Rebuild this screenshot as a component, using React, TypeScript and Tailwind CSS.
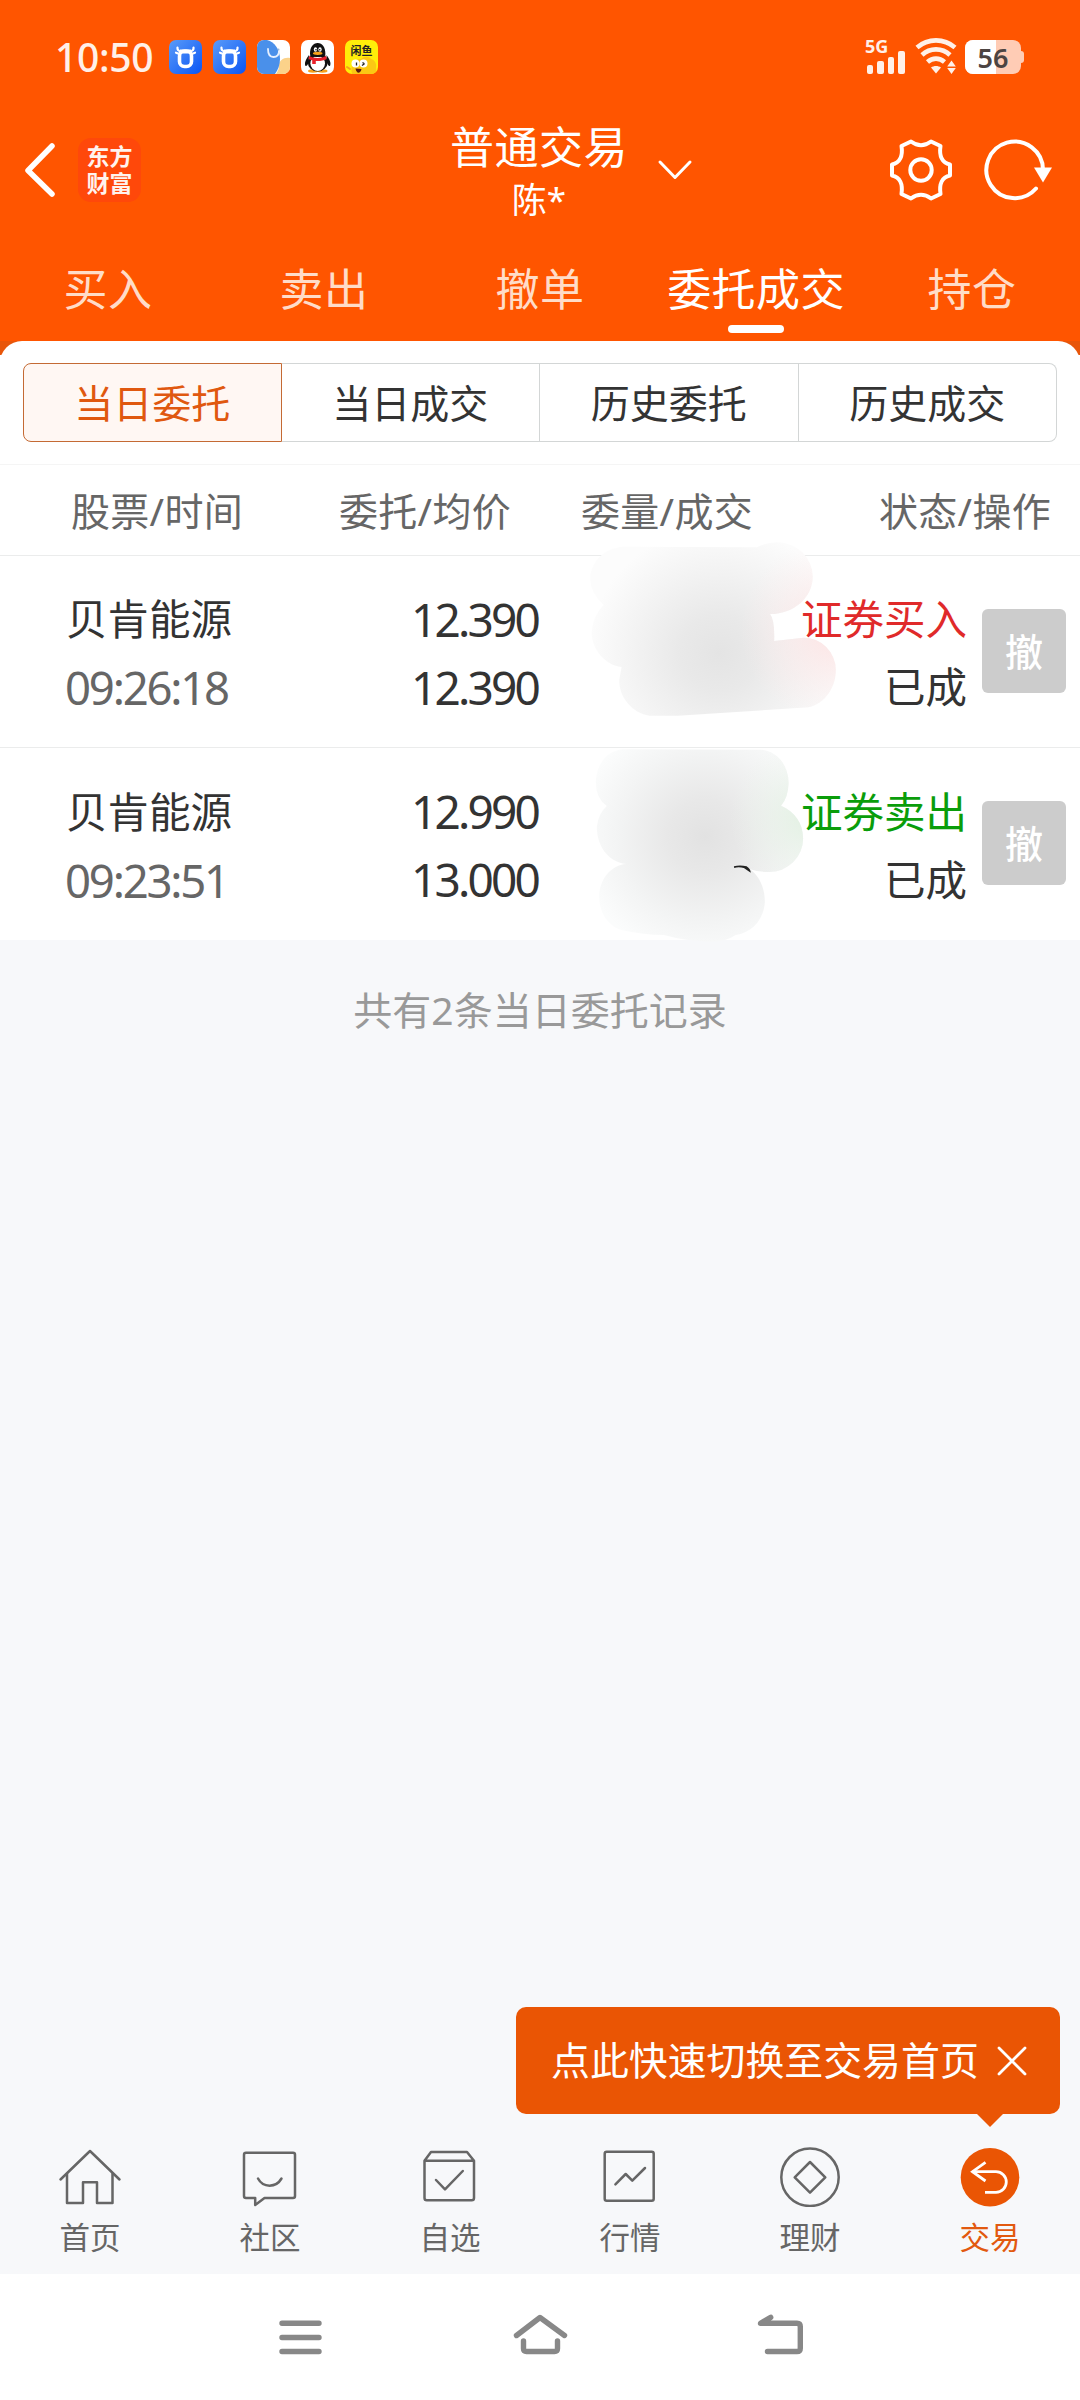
import type { ReactNode } from "react";

// ─── Data ─────────────────────────────────────────────────────────────────────

const tabs = ["买入", "卖出", "撤单", "委托成交", "持仓"];
const activeTab = "委托成交";

const segments = ["当日委托", "当日成交", "历史委托", "历史成交"];

type Order = {
  name: string;
  time: string;
  price: string;
  average: string;
  side: "buy" | "sell";
  status: string;
};

const orders: Order[] = [
  { name: "贝肯能源", time: "09:26:18", price: "12.390", average: "12.390", side: "buy", status: "已成" },
  { name: "贝肯能源", time: "09:23:51", price: "12.990", average: "13.000", side: "sell", status: "已成" },
];

const sideLabel = { buy: "证券买入", sell: "证券卖出" };
const sideStyle = { buy: "text-[#e02a2a]", sell: "text-[#0a9d0a]" };

// ─── Status bar ───────────────────────────────────────────────────────────────

function BullIcon() {
  return (
    <svg viewBox="0 0 33 34" className="h-[34px] w-[33px] rounded-[7px]">
      <defs>
        <linearGradient id="bull" x1="0" y1="0" x2="1" y2="1">
          <stop offset="0" stopColor="#5a9bf8" />
          <stop offset="1" stopColor="#0a55f5" />
        </linearGradient>
      </defs>
      <rect width="33" height="34" fill="url(#bull)" />
      <rect x="10.500" y="11" width="12" height="15.500" rx="5" fill="none" stroke="#fff" strokeWidth="3.600" />
      <path d="M11 9.500h11v4H11z" fill="#fff" />
      <path
        d="M8.500 7.500c-.3 2 .8 3.500 3.500 4M24.500 7.500c.3 2-.8 3.500-3.500 4M7 12.700l4 1.500M26 12.700l-4 1.500"
        stroke="#fff"
        strokeWidth="2.200"
        strokeLinecap="round"
        fill="none"
      />
    </svg>
  );
}

function ElephantIcon() {
  return (
    <svg viewBox="0 0 33 34" className="h-[34px] w-[33px] rounded-[7px]">
      <rect width="33" height="34" fill="#fff" />
      <path d="M33 18c-6-1-11 2-11 8 0 4-2 6-3 8h14z" fill="#fbd28a" />
      <path d="M0 0h10c8 2 13 10 13 19 0 6-2 11-5 15H0z" fill="#4a90ea" />
      <path d="M11 9c0 5 2 8 5.500 8s5.500-2.500 5.500-6" fill="none" stroke="#e6f0ff" strokeWidth="1.800" strokeLinecap="round" />
      <circle cx="21.500" cy="9.500" r="1" fill="#9cb8d8" />
    </svg>
  );
}

function PenguinIcon() {
  return (
    <svg viewBox="0 0 33 34" className="h-[34px] w-[33px] rounded-[7px]">
      <rect width="33" height="34" fill="#fff" />
      <ellipse cx="12" cy="31" rx="5" ry="1.700" fill="#f7a21b" />
      <ellipse cx="21.500" cy="31" rx="5" ry="1.700" fill="#f7a21b" />
      <path d="M8 15c-3 4-5 8-3.500 11 1 .5 2-1 3-3M25.500 15c3 4 5 8 3.500 11-1 .5-2-1-3-3" fill="#111" />
      <ellipse cx="16.700" cy="22" rx="10" ry="9.500" fill="#111" />
      <ellipse cx="16.700" cy="23.500" rx="7.300" ry="7.500" fill="#fff" />
      <path d="M9 14c0-7 3-11 7.700-11s7.700 4 7.700 11c0 2-3 3-7.700 3s-7.700-1-7.700-3z" fill="#111" />
      <ellipse cx="14.500" cy="9.500" rx="1.700" ry="2.300" fill="#fff" />
      <ellipse cx="19" cy="9.500" rx="1.700" ry="2.300" fill="#fff" />
      <circle cx="15" cy="9.700" r=".8" fill="#111" />
      <circle cx="18.700" cy="9.700" r=".8" fill="#111" />
      <ellipse cx="16.700" cy="13.300" rx="4.800" ry="1.600" fill="#f7a21b" />
      <path d="M8.300 16c4 2.500 12.500 2.500 16.700 0l.8 3c-3 1.700-7 2.200-11 2v3h-3.600v-3.800c-1.500-.3-2.800-.7-3.700-1.200z" fill="#e8202a" />
    </svg>
  );
}

function FishIcon() {
  return (
    <div className="relative h-[34px] w-[33px] overflow-hidden rounded-[7px] bg-[#ffee0a]">
      <svg viewBox="0 0 33 34" className="absolute inset-0 h-full w-full">
        <path d="M7 34c-2-8 2-15 9-15 3-3 8-3 10 0 4 1 6 5 5 9l1 6z" fill="#fbc814" />
        <circle cx="10.500" cy="23.500" r="4" fill="#fff" />
        <circle cx="18.500" cy="23.500" r="4" fill="#fff" />
        <path d="M11.500 22.500v3M17 25.500l2.500-1.800M17.500 22.500l2 1.300" stroke="#222" strokeWidth="1.300" />
        <path d="M10.500 28.500l6 .6c-.5 2.500-1.800 3.700-3 3.700s-2.700-1.700-3-4.300z" fill="#5a1a10" />
        <path d="M2 27l3 2" stroke="#f7a21b" strokeWidth="2" strokeLinecap="round" />
      </svg>
      <p className="relative mt-[4px] text-center text-[11px] leading-[13px] font-bold text-[#222]">闲鱼</p>
    </div>
  );
}

function StatusBar() {
  return (
    <div className="flex h-[114px] items-center pr-[56px] pl-[55px]">
      <span className="-mt-[2px] w-[114px] text-[39px] leading-none font-medium tracking-[-.3px] text-[#fff0e8]">
        10:50
      </span>
      <div className="flex gap-[11px]">
        <BullIcon />
        <BullIcon />
        <ElephantIcon />
        <PenguinIcon />
        <FishIcon />
      </div>

      {/* Signal, wifi, battery */}
      <div className="ml-auto flex h-[38px] items-center">
        <div className="-mt-[2px] mr-[2px] flex h-[35px] w-[48px] flex-col justify-between">
          <span className="h-[12px] text-[18px] leading-[14px] font-bold text-[#fff0e8]">5G</span>
          <div className="-mt-[3px] ml-[2px] flex items-end gap-[4px]">
            <i className="h-[9px] w-[6.400px] rounded-[2px] bg-[#fff0e8]" />
            <i className="h-[13px] w-[6.400px] rounded-[2px] bg-[#fff0e8]" />
            <i className="h-[17px] w-[6.400px] rounded-[2px] bg-[#fff0e8]" />
            <i className="h-[23px] w-[6.400px] rounded-[2px] bg-[#fff0e8]" />
          </div>
        </div>
        <svg viewBox="0 0 42 36" className="-mt-[2px] mr-[8px] h-[36px] w-[42px]" fill="none" stroke="#fff0e8" strokeWidth="4.600">
          <path d="M2 9.500c11-9.500 27-9.500 38 0" />
          <path d="M7 17c8-7.500 20-7.500 28 0" />
          <path d="M12.500 24c5-4.500 12-4.500 17 0" />
          <path d="M16 29.500c3-2 7-2 10 0l-5 6z" fill="#fff0e8" stroke="none" />
          <path d="M36.500 22.500l4.300 6h-8.600zM36.500 36l4.300-6h-8.600z" fill="#fff0e8" stroke="none" />
        </svg>
        <div className="flex items-center">
          <div className="relative flex h-[34px] w-[56px] items-center justify-center overflow-hidden rounded-[8px] bg-[#ffccb5]">
            <i className="absolute inset-y-0 left-0 w-[31px] bg-white" />
            <span className="relative text-[27px] leading-none font-semibold text-[#4c4442]">56</span>
          </div>
          <i className="h-[12px] w-[3px] rounded-r-[3px] bg-[#ffccb5]" />
        </div>
      </div>
    </div>
  );
}

// ─── Header ───────────────────────────────────────────────────────────────────

function TitleBar() {
  return (
    <div className="flex h-[112px] items-center px-[24px]">
      <svg viewBox="0 0 34 56" className="-ml-[1px] h-[56px] w-[34px]" fill="none" stroke="#fff" strokeWidth="5.500" strokeLinecap="round" strokeLinejoin="round">
        <path d="M29 4L5 28.500 29 52" />
      </svg>
      <div className="ml-[21px] flex h-[64px] w-[63px] items-center justify-center rounded-[13px] bg-[#ff480a]">
        <p className="w-[46px] text-[23px] leading-[27px] font-bold break-all text-[#fff3ee]">东方财富</p>
      </div>

      <div className="mt-[3px] ml-[309px] flex w-[178px] flex-col items-center text-white">
        <h1 className="text-[44px] leading-[56px] tracking-[.5px]">普通交易</h1>
        <p className="text-[35px] leading-[50px]">陈*</p>
      </div>
      <svg viewBox="0 0 38 22" className="ml-[28px] h-[22px] w-[38px]" fill="none" stroke="#fff" strokeWidth="3" strokeLinecap="round" strokeLinejoin="round">
        <path d="M4 3l15 15.500L34 3" />
      </svg>

      <svg viewBox="-33 -33 66 66" className="ml-auto h-[66px] w-[66px]" fill="none" stroke="#fff" strokeWidth="4" strokeLinejoin="round">
        <path d="M-10-28.500Q0-21 10-28.500L19.500-24C18-14 21-7 29-5.500V5.500C21 7 18 14 19.500 24L10 28.500Q0 21-10 28.500L-19.500 24C-18 14-21 7-29 5.500V-5.500C-21-7-18-14-19.500-24Z" />
        <circle r="10.700" />
      </svg>
      <svg viewBox="0 0 74 66" className="mr-[2px] ml-[26px] h-[66px] w-[74px]" fill="none" stroke="#fff" strokeWidth="4" strokeLinecap="round">
        <path d="M56 51.500A28.300 28.300 0 1 1 63 33" />
        <path d="M54 30.500h18l-9 15z" fill="#fff" stroke="none" />
      </svg>
    </div>
  );
}

function TradeTabs() {
  return (
    <nav className="grid h-[115px] grid-cols-5">
      {tabs.map((tab) => (
        <div
          key={tab}
          className={`flex flex-col items-center pt-[34px] text-[44px] leading-[58px] tracking-[.4px] ${
            tab === activeTab ? "text-white" : "text-[#ffdcc8]"
          }`}
        >
          {tab}
          {tab === activeTab ? <i className="mt-[7px] h-[8px] w-[56px] rounded-full bg-white" /> : null}
        </div>
      ))}
    </nav>
  );
}

// ─── Order list ───────────────────────────────────────────────────────────────

function SegmentControl() {
  return (
    <div className="mx-[23px] grid h-[79px] grid-cols-4 text-[39px] text-[#333]">
      {segments.map((label, i) => (
        <div
          key={label}
          className={`flex items-center justify-center border pt-px ${
            i === 0
              ? "rounded-l-[8px] border-[#c46a34] bg-[#fff7f3] text-[#e0580f]"
              : i === segments.length - 1
                ? "rounded-r-[8px] border-l-0 border-[#d3d6d6]"
                : "border-l-0 border-[#d3d6d6]"
          }`}
        >
          {label}
        </div>
      ))}
    </div>
  );
}

function OrderRow({ order }: { order: Order }) {
  return (
    <div className="flex h-[192px] items-center border-b border-[#ebecec] pr-[14px] pl-[66px] text-[41.500px] leading-[68px] text-[#333] last:border-b-0">
      <div className="mt-[3px] w-[200px]">
        <p>{order.name}</p>
        <p className="-ml-px text-[45.500px] tracking-[-2.200px] text-[#666]">{order.time}</p>
      </div>
      <div className="mt-[2px] w-[272px] text-right text-[46px] tracking-[-2.800px]">
        <p>{order.price}</p>
        <p>{order.average}</p>
      </div>
      <div className="mt-[3px] ml-auto text-right">
        <p className={sideStyle[order.side]}>{sideLabel[order.side]}</p>
        <p>{order.status}</p>
      </div>
      <button className="-mt-[2px] ml-[15px] h-[84px] w-[84px] rounded-[6px] bg-[#ccc] text-[38px] leading-[84px] font-medium text-white">
        撤
      </button>
    </div>
  );
}

// Brushed-out quantities, painted over the third column of both rows.
function QuantityMask() {
  return (
    <svg
      viewBox="0 0 1568 1500"
      preserveAspectRatio="none"
      className="pointer-events-none absolute -top-[16px] left-[540px] h-[500px] w-[540px]"
    >
      <defs>
        <radialGradient id="grey1" gradientUnits="userSpaceOnUse" cx="520" cy="340" r="380">
          <stop offset="0" stopColor="#e4e4e4" />
          <stop offset=".3" stopColor="#e9e9e9" />
          <stop offset=".7" stopColor="#f4f4f4" />
          <stop offset="1" stopColor="#fcfcfc" />
        </radialGradient>
        <radialGradient id="grey2" gradientUnits="userSpaceOnUse" cx="480" cy="890" r="370">
          <stop offset="0" stopColor="#e2e2e2" />
          <stop offset=".3" stopColor="#e8e8e8" />
          <stop offset=".7" stopColor="#f3f4f4" />
          <stop offset="1" stopColor="#fbfcfc" />
        </radialGradient>
        <radialGradient id="pink" gradientUnits="userSpaceOnUse" cx="860" cy="270" r="280">
          <stop offset="0" stopColor="#fde2e2" />
          <stop offset="1" stopColor="#fdeeee" stopOpacity="0" />
        </radialGradient>
        <radialGradient id="green" gradientUnits="userSpaceOnUse" cx="790" cy="830" r="240">
          <stop offset="0" stopColor="#e0f0e0" />
          <stop offset="1" stopColor="#eef5ee" stopOpacity="0" />
        </radialGradient>
        <path
          id="blob1"
          d="M240 20L630 22Q655 8 690 7A102 104 0 0 1 792 110C792 170 740 222 668 222Q682 240 680 303L765 293A94 98 0 0 1 859 390C859 440 830 490 780 502Q600 514 400 527H318C270 520 230 475 230 420L237 381C190 375 150 330 150 275Q155 225 185 195Q146 160 146 115C148 65 185 25 240 20Z"
        />
        <path
          id="blob2"
          d="M240 628L640 629A84 100 0 0 1 722 730Q720 775 700 797C740 815 764 850 764 895A98 100 0 0 1 664 996Q635 996 610 988C640 1010 653 1050 653 1085C650 1140 615 1178 568 1185Q540 1205 500 1205Q420 1203 360 1185Q300 1185 240 1171C200 1160 172 1120 172 1070C172 1020 205 975 250 972C195 965 165 915 165 860Q170 820 194 798Q162 775 162 725C165 665 200 632 240 628Z"
        />
      </defs>
      <use href="#blob1" fill="url(#grey1)" />
      <use href="#blob1" fill="url(#pink)" />
      <use href="#blob2" fill="url(#grey2)" />
      <use href="#blob2" fill="url(#green)" />
      <path d="M563 979Q580 974 600 979Q612 988 612 998Q600 990 592 984Q576 980 564 984Z" fill="#222" />
    </svg>
  );
}

// ─── Bottom navigation ────────────────────────────────────────────────────────

function NavItem({ label, active, children }: { label: string; active?: boolean; children: ReactNode }) {
  return (
    <div className={`flex flex-col items-center text-[30.500px] leading-[44px] ${active ? "text-[#e2590f]" : "text-[#666]"}`}>
      <svg
        viewBox="0 0 64 60"
        className="h-[60px] w-[64px]"
        fill="none"
        stroke="#666"
        strokeWidth="2.500"
        strokeLinecap="round"
        strokeLinejoin="round"
      >
        {children}
      </svg>
      <span className="mt-[8px]">{label}</span>
    </div>
  );
}

function BottomNav() {
  return (
    <nav className="grid h-[127px] grid-cols-6">
      <NavItem label="首页">
        <path d="M2.500 32.500L32 4l29.500 28.500" />
        <path d="M9 27v29h16V35.300h14V56h15.500V27" />
      </NavItem>
      <NavItem label="社区">
        <path d="M8 5.700h47q2 0 2 2V49q0 2-2 2H26.500l-9.300 7v-7H8q-2 0-2-2V7.700q0-2 2-2z" />
        <path d="M20 31.500c5 9.500 18 9.500 23.500 0" />
      </NavItem>
      <NavItem label="自选">
        <path d="M6.500 13.700L13 5h36l7 8.700V51q0 2.300-2.300 2.300H8.800q-2.300 0-2.300-2.300zH56" />
        <path d="M18 33l9 9.300L44.800 24" />
      </NavItem>
      <NavItem label="行情">
        <rect x="6.700" y="4.800" width="49" height="49" rx="2" />
        <path d="M17.400 37.300L27.700 27l6.600 6.700L47 21" />
      </NavItem>
      <NavItem label="理财">
        <circle cx="32" cy="30.300" r="28.700" />
        <path d="M32 15l15.300 15.300L32 45.600 16.700 30.300z" />
      </NavItem>
      <NavItem label="交易" active>
        <circle cx="32" cy="30.300" r="29.300" fill="#ea5504" stroke="none" />
        <g stroke="#fff" strokeWidth="2.800" strokeLinejoin="miter" strokeLinecap="butt">
          <path d="M27.500 15.300L14.500 24.700l13 9.300" />
          <path d="M14.500 24.700H38a10.300 10.300 0 0 1 0 20.600H27" />
        </g>
      </NavItem>
    </nav>
  );
}

function SwitchTip() {
  return (
    <div className="absolute top-[2007px] right-[20px] flex h-[107px] w-[544px] items-center rounded-[10px] bg-[#ea5504] pl-[35px] text-[38.900px] text-white">
      点此快速切换至交易首页
      <svg viewBox="0 0 30 30" className="ml-[18px] h-[30px] w-[30px]" stroke="#fff" strokeWidth="2.800" strokeLinecap="round">
        <path d="M2 2l26 26M28 2L2 28" />
      </svg>
      <svg viewBox="0 0 28 14" className="absolute top-full right-[56px] -mt-px h-[14px] w-[28px]">
        <path d="M0 0h28L14 14z" fill="#ea5504" />
      </svg>
    </div>
  );
}

function SystemBar() {
  return (
    <div className="h-[126px] bg-white">
      <svg viewBox="0 0 1080 126" className="h-[126px] w-[1080px]" fill="none" stroke="#888" strokeWidth="5.400" strokeLinecap="round" strokeLinejoin="round">
        <path d="M282 49.300h37M282 63.500h37M282 77.500h37" />
        <path d="M516.500 61.500L540 43.500l24.500 18M523.500 67v7.500q0 3 3 3h28q3 0 3-3V67" />
        <path d="M767.500 77.500H797q3.300 0 3.300-3.300V52.600q0-3.300-3.300-3.300H760.500l10.200-6" />
      </svg>
    </div>
  );
}

// ─── Page ─────────────────────────────────────────────────────────────────────

export default function App() {
  return (
    <div className="relative flex h-[2400px] w-[1080px] flex-col overflow-hidden bg-[#f7f8fa] font-['Noto_Sans','Noto_Sans_CJK_SC',sans-serif]">
      <header className="bg-[#ff5500]">
        <StatusBar />
        <TitleBar />
        <TradeTabs />
      </header>

      <main className="flex-1">
        <div className="bg-[linear-gradient(#e8560a_14px,#fff_14px)]">
          <div className="rounded-t-[22px] bg-white pt-[22px] pb-[22px]">
            <SegmentControl />
          </div>
        </div>

        {/* Column titles */}
        <div className="flex h-[92px] items-center border-y border-t-[#f5f5f5] border-b-[#ebecec] bg-white pt-[2px] pr-[29px] pl-[71px] text-[39px] tracking-[.3px] text-[#666]">
          <span className="w-[268px]">股票/时间</span>
          <span className="w-[242px]">委托/均价</span>
          <span>委量/成交</span>
          <span className="ml-auto">状态/操作</span>
        </div>

        <div className="relative bg-white">
          <div>
            {orders.map((order) => (
              <OrderRow key={order.time} order={order} />
            ))}
          </div>
          <QuantityMask />
        </div>

        <p className="pt-[41px] text-center text-[39px] leading-[58px] text-[#999]">共有2条当日委托记录</p>
      </main>

      <BottomNav />
      <SystemBar />
      <SwitchTip />
    </div>
  );
}
